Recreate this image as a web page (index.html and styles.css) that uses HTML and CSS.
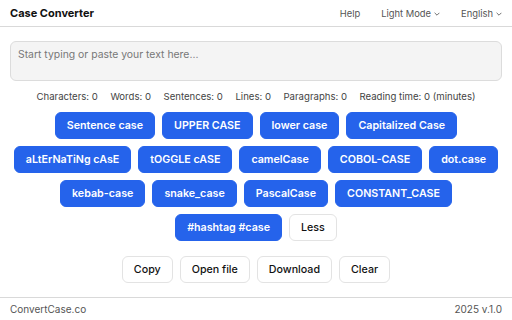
FILE: index.html
```html
<!DOCTYPE html>
<html lang="en">
<head>
<meta charset="utf-8">
<title>Case Converter</title>
<link rel="stylesheet" href="styles.css">
</head>
<body>
<div class="page">
  <header class="header">
    <div class="title">Case Converter</div>
    <nav class="nav">
      <span class="nav-item">Help</span>
      <span class="nav-item">Light Mode <svg class="chev" viewBox="0 0 10 6" width="6" height="4"><path d="M1 1l4 4 4-4" fill="none" stroke="currentColor" stroke-width="1.4"/></svg></span>
      <span class="nav-item">English <svg class="chev" viewBox="0 0 10 6" width="6" height="4"><path d="M1 1l4 4 4-4" fill="none" stroke="currentColor" stroke-width="1.4"/></svg></span>
    </nav>
  </header>
  <main class="main">
    <textarea class="input" placeholder="Start typing or paste your text here..."></textarea>
    <div class="stats">
      <span>Characters: 0</span>
      <span>Words: 0</span>
      <span>Sentences: 0</span>
      <span>Lines: 0</span>
      <span>Paragraphs: 0</span>
      <span>Reading time: 0 (minutes)</span>
    </div>
    <div class="cases">
      <button class="btn primary">Sentence case</button>
      <button class="btn primary">UPPER CASE</button>
      <button class="btn primary">lower case</button>
      <button class="btn primary">Capitalized Case</button>
      <button class="btn primary">aLtErNaTiNg cAsE</button>
      <button class="btn primary">tOGGLE cASE</button>
      <button class="btn primary">camelCase</button>
      <button class="btn primary">COBOL-CASE</button>
      <button class="btn primary">dot.case</button>
      <button class="btn primary">kebab-case</button>
      <button class="btn primary">snake_case</button>
      <button class="btn primary">PascalCase</button>
      <button class="btn primary">CONSTANT_CASE</button>
      <button class="btn primary">#hashtag #case</button>
      <button class="btn light">Less</button>
    </div>
    <div class="actions">
      <button class="btn light">Copy</button>
      <button class="btn light">Open file</button>
      <button class="btn light">Download</button>
      <button class="btn light">Clear</button>
    </div>
  </main>
  <footer class="footer">
    <span>ConvertCase.co</span>
    <span>2025 v.1.0</span>
  </footer>
</div>
</body>
</html>
```
FILE: styles.css
```css
* { box-sizing: border-box; }
html, body { margin: 0; padding: 0; }
body {
  font-family: Inter, "Noto Sans", sans-serif;
  color: #111;
  background: #fff;
  width: 512px;
  height: 320px;
  overflow: hidden;
}
.page {
  display: flex;
  flex-direction: column;
  height: 320px;
}
.header {
  height: 27px;
  display: flex;
  align-items: center;
  justify-content: space-between;
  padding: 0 10px;
  border-bottom: 1px solid #d9d9d9;
}
.title {
  font-size: 11px;
  font-weight: 700;
  color: #111;
}
.nav {
  display: flex;
  gap: 21px;
  font-size: 9.4px;
  color: #555;
}
.nav-item {
  display: flex;
  align-items: center;
  gap: 3px;
  white-space: nowrap;
}
.chev { margin-top: 1px; }
.main {
  flex: 1;
  padding: 14px 10px 0;
  display: flex;
  flex-direction: column;
}
.input {
  display: block;
  width: 100%;
  height: 40px;
  resize: none;
  background: #f4f4f4;
  border: 1px solid #dcdcdc;
  border-radius: 6px;
  padding: 6px 7px;
  font-family: inherit;
  font-size: 10.4px;
  outline: none;
}
.input::placeholder { color: #777; }
.stats {
  display: flex;
  justify-content: center;
  gap: 12.5px;
  margin-top: 10px;
  font-size: 9.6px;
  color: #444;
  line-height: 12px;
  white-space: nowrap;
}
.cases {
  display: flex;
  flex-wrap: wrap;
  justify-content: center;
  gap: 7px 7px;
  margin-top: 9px;
}
.btn {
  height: 27px;
  padding: 0 11px;
  border-radius: 6px;
  font-family: inherit;
  font-size: 10.7px;
  font-weight: 600;
  border: 1px solid transparent;
  cursor: pointer;
  white-space: nowrap;
}
.btn.primary {
  background: #2563eb;
  color: #fff;
  border-color: #2563eb;
}
.btn.light {
  background: #fff;
  color: #111;
  border-color: #e3e3e3;
  font-weight: 500;
}
.actions {
  display: flex;
  justify-content: center;
  gap: 7px;
  margin-top: 15px;
}
.footer {
  height: 23px;
  border-top: 1px solid #d9d9d9;
  display: flex;
  align-items: center;
  justify-content: space-between;
  padding: 0 10px;
  font-size: 10px;
  color: #555;
}
```
